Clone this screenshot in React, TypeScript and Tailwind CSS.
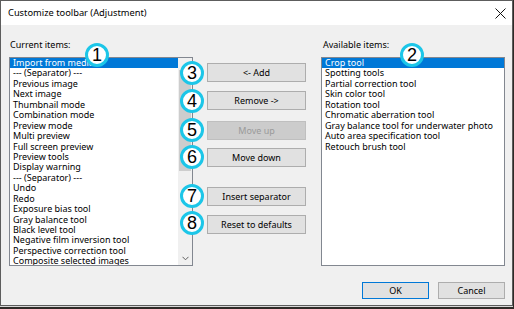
import React from "react";

const LEFT = [
  "Import from media",
  "--- (Separator) ---",
  "Previous image",
  "Next image",
  "Thumbnail mode",
  "Combination mode",
  "Preview mode",
  "Multi preview",
  "Full screen preview",
  "Preview tools",
  "Display warning",
  "--- (Separator) ---",
  "Undo",
  "Redo",
  "Exposure bias tool",
  "Gray balance tool",
  "Black level tool",
  "Negative film inversion tool",
  "Perspective correction tool",
  "Composite selected images",
];

const RIGHT = [
  "Crop tool",
  "Spotting tools",
  "Partial correction tool",
  "Skin color tool",
  "Rotation tool",
  "Chromatic aberration tool",
  "Gray balance tool for underwater photo",
  "Auto area specification tool",
  "Retouch brush tool",
];

const font = { fontFamily: '"Noto Sans", "Segoe UI", sans-serif' };

function Badge({ n, x, y }: { n: number; x: number; y: number }) {
  return (
    <div
      className="absolute flex h-[24px] w-[24px] items-center justify-center rounded-full border-[3px] border-[#1cc6e8] bg-white text-[18px] leading-none text-black"
      style={{ left: x - 12, top: y - 12, fontFamily: '"Liberation Sans", Arial, sans-serif' }}
    >
      {n}
    </div>
  );
}

function Btn({ label, disabled, mt }: { label: string; disabled?: boolean; mt: string }) {
  return (
    <div
      className={
        "flex h-[19px] items-center justify-center border text-[9px] " +
        mt +
        (disabled
          ? " border-[#bfbfbf] bg-[#cccccc] text-[#9a9a9a]"
          : " border-[#adadad] bg-[#e1e1e1] text-black")
      }
    >
      {label}
    </div>
  );
}

export default function App() {
  return (
    <div className="relative h-[309px] w-[514px] overflow-hidden bg-[#2e2a27]" style={font}>
      <div className="flex h-[306px] w-[513px] flex-col border border-[#5d5d5d] bg-[#f0f0f0]">
        {/* title bar */}
        <div className="flex h-[24px] shrink-0 items-center justify-between bg-white pl-[7px] pr-[6px]">
          <span className="text-[9.3px] text-black">Customize toolbar (Adjustment)</span>
          <svg width="11" height="11" viewBox="0 0 11 11">
            <path d="M0.5 0.5 L10.5 10.5 M10.5 0.5 L0.5 10.5" stroke="#111" strokeWidth="1" />
          </svg>
        </div>
        {/* body */}
        <div className="flex flex-1 flex-col">
          <div className="flex pl-[8px]">
            {/* left column */}
            <div className="flex w-[184px] flex-col">
              <div className="h-[32px] pl-[1px] pt-[14px] text-[9px] leading-[12px] text-black">Current items:</div>
              <div className="flex h-[209px] border border-[#828790] bg-white">
                <div className="flex-1 overflow-hidden">
                  {LEFT.map((t, i) => (
                    <div
                      key={i}
                      className={
                        "h-[10.45px] whitespace-nowrap pl-[3px] text-[9px] leading-[10.45px] " +
                        (i === 0 ? "bg-[#0078d7] text-white" : "text-black")
                      }
                    >
                      {t}
                    </div>
                  ))}
                </div>
                <div className="flex w-[14px] flex-col bg-[#f0f0f0]">
                  <div className="h-[12px]" />
                  <div className="mx-[1px] h-[101px] bg-[#cdcdcd]" />
                  <div className="flex-1" />
                  <div className="flex h-[14px] items-center justify-center">
                    <svg width="7" height="5" viewBox="0 0 7 5">
                      <path d="M0.5 0.8 L3.5 3.8 L6.5 0.8" stroke="#606060" strokeWidth="1" fill="none" />
                    </svg>
                  </div>
                </div>
              </div>
            </div>
            {/* middle buttons */}
            <div className="ml-[14px] flex w-[99px] flex-col pt-[38px]">
              <Btn label="<- Add" mt="mt-0" />
              <Btn label="Remove ->" mt="mt-[9px]" />
              <Btn label="Move up" disabled mt="mt-[11px]" />
              <Btn label="Move down" mt="mt-[8px]" />
              <Btn label="Insert separator" mt="mt-[20px]" />
              <Btn label="Reset to defaults" mt="mt-[9px]" />
            </div>
            {/* right column */}
            <div className="ml-[15px] flex w-[184px] flex-col">
              <div className="h-[32px] pl-[2px] pt-[14px] text-[9px] leading-[12px] text-black">Available items:</div>
              <div className="h-[209px] overflow-hidden border border-[#828790] bg-white">
                {RIGHT.map((t, i) => (
                  <div
                    key={i}
                    className={
                      "h-[10.45px] whitespace-nowrap pl-[3px] text-[9px] leading-[10.45px] " +
                      (i === 0 ? "bg-[#0078d7] text-white" : "text-black")
                    }
                  >
                    {t}
                  </div>
                ))}
              </div>
            </div>
          </div>
          {/* bottom buttons */}
          <div className="mt-[16px] flex justify-end gap-[9px] pr-[7px]">
            <div className="flex h-[17px] w-[67px] items-center justify-center border border-[#0078d7] bg-[#e1e1e1] text-[9px] text-black">
              OK
            </div>
            <div className="flex h-[17px] w-[67px] items-center justify-center border border-[#adadad] bg-[#e1e1e1] text-[9px] text-black">
              Cancel
            </div>
          </div>
        </div>
      </div>
      <div className="absolute left-0 top-[306px] h-[1px] w-[513px] bg-[#d8d8d8]" />
      <Badge n={1} x={97} y={55} />
      <Badge n={2} x={412} y={55} />
      <Badge n={3} x={192} y={73} />
      <Badge n={4} x={192} y={101} />
      <Badge n={5} x={192} y={130} />
      <Badge n={6} x={192} y={157} />
      <Badge n={7} x={192} y={196} />
      <Badge n={8} x={192} y={223} />
    </div>
  );
}
